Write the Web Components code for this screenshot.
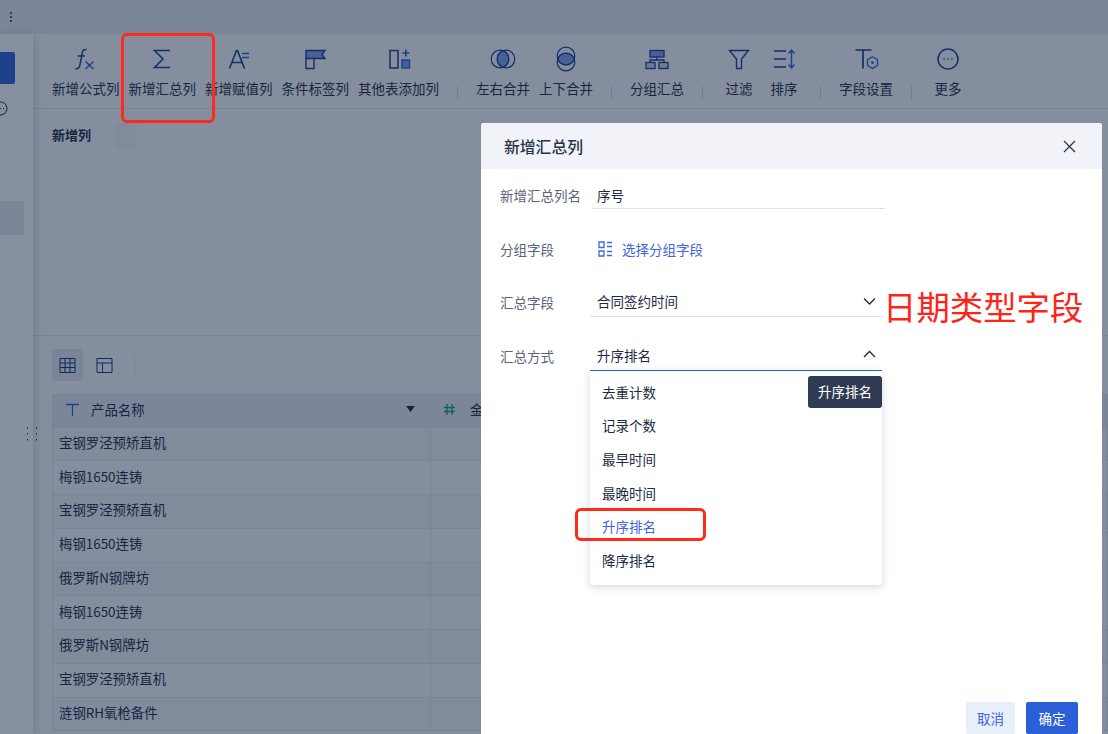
<!DOCTYPE html>
<html lang="zh-CN">
<head>
<meta charset="utf-8">
<title>新增汇总列</title>
<style>
  html, body { margin: 0; height: 734px; overflow: hidden; background: #fff; }
  body { font-family: "Noto Sans CJK SC", "Noto Sans", sans-serif; font-size: 13.4px; color: #1c2a44; }
</style>
</head>
<body>
<app-page>
  <app-sidebar slot="side"></app-sidebar>
  <app-toolbar></app-toolbar>
  <new-columns></new-columns>
  <view-switch></view-switch>
  <data-table></data-table>
  <add-dialog slot="over"></add-dialog>
  <red-mark slot="over" style="left:121px;top:33px;width:94px;height:90px"></red-mark>
  <red-mark slot="over" style="left:575px;top:508px;width:131px;height:33px"></red-mark>
</app-page>

<script>
class AppPage extends HTMLElement {
  constructor() {
    super();
    this.attachShadow({ mode: 'open' });
    this.shadowRoot.innerHTML = `
      <style>
        :host { display: grid; grid-template: 34px 700px / 33px 1075px; width: 1108px; height: 734px; position: relative; overflow: hidden; }
        .top { grid-column: 1 / 3; background: #e7ebf3; display: flex; align-items: center; padding-left: 9px; }
        .side { position: relative; z-index: 1; }
        main { background: #fbfbfc; min-width: 0; overflow: hidden; }
        .mask { position: absolute; inset: 0; z-index: 2; background: rgba(15, 33, 63, .5); }
      </style>
      <div class="top">
        <svg width="4" height="14" viewBox="0 0 4 14" fill="#1c2a44"><circle cx="2" cy="3" r="1"/><circle cx="2" cy="7" r="1"/><circle cx="2" cy="11" r="1"/></svg>
      </div>
      <div class="side"><slot name="side"></slot></div>
      <main><slot></slot></main>
      <div class="mask"></div>
      <slot name="over"></slot>
    `;
  }
}

class AppSidebar extends HTMLElement {
  constructor() {
    super();
    this.attachShadow({ mode: 'open' });
    this.shadowRoot.innerHTML = `
      <style>
        :host { display: block; height: 100%; background: #fff; box-shadow: 2px 0 9px rgba(20, 35, 70, .16); position: relative; }
        .nav { position: absolute; left: 0; top: 18px; width: 15px; height: 32px; background: #2a5fd8; border-radius: 0 2px 2px 0; }
        .more { position: absolute; left: -8px; top: 66px; }
        .hi { position: absolute; left: 0; top: 167px; width: 24px; height: 34px; background: #e4e8f1; }
        .drag { position: absolute; left: 26px; top: 392px; }
      </style>
      <div class="nav"></div>
      <svg class="more" width="17" height="17" viewBox="0 0 17 17" fill="none" stroke="#1c2a44"><circle cx="8.5" cy="8.5" r="6.5"/><path d="M5 8.5h1M8 8.5h1M11 8.5h1"/></svg>
      <div class="hi"></div>
      <svg class="drag" width="12" height="16" viewBox="0 0 12 16" fill="#1c2a44"><rect x="1" y="1" width="1" height="1.5"/><rect x="10" y="1" width="1" height="1.5"/><rect x="1" y="7" width="1" height="1.5"/><rect x="10" y="7" width="1" height="1.5"/><rect x="1" y="13" width="1" height="1.5"/><rect x="10" y="13" width="1" height="1.5"/></svg>
    `;
  }
}

const TOOL_ICONS = {
  fx: `<path d="M12.5 2.8c-2.6-.7-3.700.5-4.200 3L5.800 18.600c-.5 2.500-1.800 3.400-4.300 2.900M3.800 9h7" stroke-width="1.5"/><path d="M11.500 14.500l8 7.500M19.500 14.500l-8 7.500" stroke="#2a5fd8" stroke-width="1.5"/>`,
  sum: `<path d="M20 3.500H4.500L13 12l-8.500 8.500H20" stroke-width="1.6"/>`,
  assign: `<path d="M2.500 21.500L9.500 3.500h1l7 18M5.500 15.500h9" stroke-width="1.6"/><path d="M15 6.500h7M15 10.500h7" stroke="#2a5fd8" stroke-width="1.6"/>`,
  flag: `<path d="M3 3.500h19l-3 4 3 4H3z" fill="#7f9fee" stroke-width="1.4"/><path d="M3 11.500v10h8v-10" stroke-width="1.4"/>`,
  addcol: `<rect x="3" y="3.500" width="8" height="17.500" stroke-width="1.5"/><rect x="15" y="13" width="7.500" height="8" fill="#7f9fee" stroke="#2a5fd8" stroke-width="1.4"/><path d="M18.800 2.500v7M15.300 6h7" stroke="#2a5fd8" stroke-width="1.6"/>`,
  hmerge: `<path d="M12 3.730a8.800 8.800 0 0 1 0 16.540a8.800 8.800 0 0 1 0-16.540z" fill="#7f9fee"/><circle cx="9" cy="12" r="8.800" stroke-width="1.200"/><circle cx="15" cy="12" r="8.800" stroke-width="1.200"/>`,
  vmerge: `<path d="M3.730 12a8.800 8.800 0 0 1 16.540 0a8.800 8.800 0 0 1-16.540 0z" fill="#7f9fee"/><circle cx="12" cy="9" r="8.800" stroke-width="1.200"/><circle cx="12" cy="15" r="8.800" stroke-width="1.200"/>`,
  group: `<rect x="5" y="3.500" width="14" height="6.500" fill="#7f9fee" stroke-width="1.300"/><path d="M12 10v3M5 15.500V13h14v2.500" stroke-width="1.300"/><rect x="1" y="15.500" width="9" height="6" fill="#c9d5f4" stroke-width="1.300"/><rect x="14" y="15.500" width="9" height="6" fill="#c9d5f4" stroke-width="1.300"/>`,
  filter: `<path d="M2.500 3.500h19L14.500 12v9.500h-5V12z" stroke-width="1.400"/>`,
  sort: `<path d="M2 4h12M2 12h12M2 20h12" stroke-width="1.600"/><path d="M19.500 3v18M16.500 6.500l3-3.500 3 3.500M16.500 17.500l3 3.500 3-3.500" stroke="#2a5fd8" stroke-width="1.400"/>`,
  field: `<path d="M1.500 3h16M9 3v18.500" stroke-width="1.700"/><path d="M18.500 9.800l5 2.900v5.800l-5 2.900-5-2.900v-5.800z" stroke="#2a5fd8" stroke-width="1.300"/><circle cx="18.500" cy="15.600" r="1.400" fill="#2a5fd8" stroke="none"/>`,
  more: `<circle cx="12" cy="12" r="10" stroke-width="1.500"/><path d="M7.500 12h1.200M11.400 12h1.200M15.300 12h1.200" stroke-width="1.600"/>`
};

class ToolItem extends HTMLElement {
  constructor() {
    super();
    this.attachShadow({ mode: 'open' });
  }

  connectedCallback() {
    const icon = TOOL_ICONS[this.getAttribute('icon')] || '';
    this.shadowRoot.innerHTML = `
      <style>
        :host { display: flex; flex-direction: column; align-items: center; min-width: 36px; white-space: nowrap; }
        svg { display: block; margin-bottom: 8px; overflow: visible; }
        span { line-height: 18px; font-size: 13.5px; }
      </style>
      <svg width="24" height="24" viewBox="0 0 24 24" fill="none" stroke="#1c3a8e">${icon}</svg>
      <span>${this.getAttribute('label')}</span>
    `;
  }
}

class AppToolbar extends HTMLElement {
  constructor() {
    super();
    this.attachShadow({ mode: 'open' });
    this.shadowRoot.innerHTML = `
      <style>
        :host { display: flex; gap: 9px; height: 75px; box-sizing: border-box; padding: 13px 0 0 19px; border-bottom: 1px solid #e2e5ec; }
        i { align-self: flex-start; width: 1px; height: 13px; margin: 39px 9px 0; background: #d3d7e0; flex: none; }
      </style>
      <tool-item icon="fx" label="新增公式列"></tool-item>
      <tool-item icon="sum" label="新增汇总列"></tool-item>
      <tool-item icon="assign" label="新增赋值列"></tool-item>
      <tool-item icon="flag" label="条件标签列"></tool-item>
      <tool-item icon="addcol" label="其他表添加列"></tool-item>
      <i></i>
      <tool-item icon="hmerge" label="左右合并"></tool-item>
      <tool-item icon="vmerge" label="上下合并"></tool-item>
      <i></i>
      <tool-item icon="group" label="分组汇总"></tool-item>
      <i></i>
      <tool-item icon="filter" label="过滤"></tool-item>
      <tool-item icon="sort" label="排序"></tool-item>
      <i></i>
      <tool-item icon="field" label="字段设置"></tool-item>
      <i></i>
      <tool-item icon="more" label="更多"></tool-item>
    `;
  }
}

class NewColumns extends HTMLElement {
  constructor() {
    super();
    this.attachShadow({ mode: 'open' });
    this.shadowRoot.innerHTML = `
      <style>
        :host { display: flex; height: 227px; box-sizing: border-box; padding: 14px 0 0 19px; border-bottom: 1px solid #e2e5ec; }
        b { font-weight: 700; font-size: 13px; line-height: 24px; width: 63px; }
        i { width: 22px; height: 26px; background: #f3f5f8; }
      </style>
      <b>新增列</b><i></i>
    `;
  }
}

class ViewSwitch extends HTMLElement {
  constructor() {
    super();
    this.attachShadow({ mode: 'open' });
    this.shadowRoot.innerHTML = `
      <style>
        :host { display: flex; align-items: center; height: 58px; box-sizing: border-box; padding: 13px 0 13px 19px; }
        div { width: 31px; height: 32px; display: flex; align-items: center; justify-content: center; border-radius: 2px; margin-right: 6px; }
        .on { background: #e5e9f1; }
        i { width: 1px; height: 22px; background: #e5e8ee; margin-left: 8px; }
      </style>
      <div class="on"><svg width="17" height="17" viewBox="0 0 17 17" fill="none" stroke="#14307f"><path d="M1 1.500h15v14H1zM1 6h15M1 10.500h15M6 1.500v14M11 1.500v14"/></svg></div>
      <div><svg width="17" height="17" viewBox="0 0 17 17" fill="none" stroke="#14307f"><path d="M1 1.500h15v14H1zM1 6h15M6.500 6v9.500"/></svg></div>
      <i></i>
    `;
  }
}

class DataTable extends HTMLElement {
  constructor() {
    super();
    this.attachShadow({ mode: 'open' });
  }

  connectedCallback() {
    const rows = ['宝钢罗泾预矫直机', '梅钢1650连铸', '宝钢罗泾预矫直机', '梅钢1650连铸', '俄罗斯N钢牌坊',
      '梅钢1650连铸', '俄罗斯N钢牌坊', '宝钢罗泾预矫直机', '涟钢RH氧枪备件'];
    this.shadowRoot.innerHTML = `
      <style>
        :host { display: block; margin-left: 19px; }
        .row { display: grid; grid-template-columns: 378px 1fr; height: 33.75px; box-sizing: border-box; border-bottom: 1px solid #e3e6ee; border-left: 1px solid #e3e6ee; }
        .row:nth-child(odd) { background: #f3f5f9; }
        .row > div { display: flex; align-items: center; box-sizing: border-box; border-right: 1px solid #e3e6ee; padding: 0 0 4px 6px; overflow: hidden; white-space: nowrap; }
        .head { height: 33.5px; background: #e7ebf3 !important; }
        .head > div { padding: 0 0 2px 12px; }
        .head span { margin-left: 11px; }
        .head > div + div span { margin-left: 14px; }
        .head .caret { margin: 0 15px 0 auto; }
      </style>
      <div class="row head">
        <div>
          <svg width="15" height="15" viewBox="0 0 15 15" fill="none" stroke="#2a5fd8" stroke-width="1.300"><path d="M1 2.500h13M7.500 2.500V14"/></svg>
          <span>产品名称</span>
          <svg class="caret" width="9" height="6" viewBox="0 0 9 6" fill="#14254d"><path d="M0 0h9L4.500 6z"/></svg>
        </div>
        <div>
          <svg width="13" height="13" viewBox="0 0 13 13" fill="none" stroke="#159a8c" stroke-width="1.300"><path d="M4 1v11M9 1v11M1 4.500h11M1 8.500h11"/></svg>
          <span>金额</span>
        </div>
      </div>
      ${rows.map(r => `<div class="row"><div>${r}</div><div></div></div>`).join('')}
    `;
  }
}

class FormRow extends HTMLElement {
  constructor() {
    super();
    this.attachShadow({ mode: 'open' });
  }

  connectedCallback() {
    this.shadowRoot.innerHTML = `
      <style>
        :host { display: flex; height: 34px; align-items: flex-start; font-size: 13.5px; }
        label { width: 90px; flex: none; color: #5a6478; line-height: 34px; }
        ::slotted(*) { flex: none; }
      </style>
      <label>${this.getAttribute('label')}</label>
      <slot></slot>
    `;
  }
}

class FormSelect extends HTMLElement {
  constructor() {
    super();
    this.attachShadow({ mode: 'open' });
  }

  connectedCallback() {
    const open = this.hasAttribute('open');
    const chevron = open ? 'M1 7l5.500-5.500L12 7' : 'M1 1.500L6.500 7 12 1.500';
    this.shadowRoot.innerHTML = `
      <style>
        :host { display: block; position: relative; width: 292px; }
        .box { height: 32px; box-sizing: border-box; display: flex; align-items: center; justify-content: space-between; padding: 1px 6px 0 7px; border-bottom: 1px solid #dcdfe8; }
        :host([open]) .box { border-bottom: 1px solid #2a5fd8; }
        ::slotted(drop-menu) { position: absolute; left: 0; top: 32px; }
      </style>
      <div class="box">
        <span>${this.getAttribute('value')}</span>
        <svg width="13" height="9" viewBox="0 0 13 9" fill="none" stroke="#1c2a44" stroke-width="1.300"><path d="${chevron}"/></svg>
      </div>
      <slot></slot>
    `;
  }
}

class DropMenu extends HTMLElement {
  constructor() {
    super();
    this.attachShadow({ mode: 'open' });
    const items = ['去重计数', '记录个数', '最早时间', '最晚时间', '升序排名', '降序排名'];
    this.shadowRoot.innerHTML = `
      <style>
        :host { display: block; width: 292px; height: 214px; box-sizing: border-box; padding-top: 5px; background: #fff; border-radius: 0 0 3px 3px; box-shadow: 0 2px 8px rgba(40, 55, 90, .2); z-index: 2; }
        div { height: 33.6px; line-height: 33.6px; padding-left: 12px; }
        .on { color: #3f65e0; }
        .tip { position: absolute; right: 0; top: 5px; width: 74px; height: 32px; padding: 0; line-height: 31px; text-align: center; background: #2f3b52; color: #fff; border-radius: 3px; }
      </style>
      ${items.map(t => `<div class="${t === '升序排名' ? 'on' : ''}">${t}</div>`).join('')}
      <div class="tip">升序排名</div>
    `;
  }
}

class AddDialog extends HTMLElement {
  constructor() {
    super();
    this.attachShadow({ mode: 'open' });
    this.shadowRoot.innerHTML = `
      <style>
        :host { position: absolute; z-index: 3; left: 481px; top: 123px; width: 621px; height: 640px; background: #fff; border-radius: 3px 3px 0 0; display: flex; flex-direction: column; font-size: 13.5px; color: #1c2a44; }
        header { height: 46px; flex: none; display: flex; align-items: center; justify-content: space-between; padding: 0 26px 0 23px; background: #f2f3f8; border-radius: 3px 3px 0 0; }
        h2 { margin: 0; font-size: 15.8px; font-weight: 500; color: #2a3448; }
        .body { flex: 1; display: flex; flex-direction: column; gap: 19.6px; padding: 9px 19px 0; position: relative; }
        .name { width: 293px; height: 31px; margin-left: 2px; box-sizing: border-box; padding-left: 5px; line-height: 35px; border-bottom: 1px solid #dcdfe8; }
        .pick { display: flex; align-items: center; gap: 9px; height: 34px; margin-left: 8px; color: #3f65e0; }
        .foot { flex: none; display: flex; gap: 11px; justify-content: flex-end; padding: 0 24px 29px; }
        button { font: inherit; width: 49px; height: 32px; border: 0; border-radius: 2px; padding: 0; background: #e9eefb; color: #3f65e0; }
        button.ok { width: 52px; background: #2a5fd8; color: #fff; }
        .note { position: absolute; left: 402px; top: 114px; font-size: 33.4px; line-height: 46px; color: #ff2318; white-space: nowrap; }
      </style>
      <header>
        <h2>新增汇总列</h2>
        <svg width="13" height="13" viewBox="0 0 13 13" fill="none" stroke="#2a3448" stroke-width="1.200"><path d="M1 1l11 11M12 1L1 12"/></svg>
      </header>
      <div class="body">
        <form-row label="新增汇总列名"><div class="name">序号</div></form-row>
        <form-row label="分组字段">
          <div class="pick">
            <svg width="15" height="16" viewBox="0 0 15 16" fill="none" stroke="#3f65e0" stroke-width="1.300"><path d="M1 1h5v5.500H1zM1 10h5v5H1zM9 1.500h5M9 5.500h5M9 10.500h5M9 14.500h5"/></svg>
            <span>选择分组字段</span>
          </div>
        </form-row>
        <form-row label="汇总字段"><form-select value="合同签约时间"></form-select></form-row>
        <form-row label="汇总方式"><form-select value="升序排名" open><drop-menu></drop-menu></form-select></form-row>
        <div class="note">日期类型字段</div>
      </div>
      <div class="foot">
        <button>取消</button>
        <button class="ok">确定</button>
      </div>
    `;
  }
}

class RedMark extends HTMLElement {
  constructor() {
    super();
    this.attachShadow({ mode: 'open' });
    this.shadowRoot.innerHTML = `
      <style>
        :host { position: absolute; z-index: 4; box-sizing: border-box; border: 3.5px solid #ff2a1a; border-radius: 6px; }
      </style>
    `;
  }
}

customElements.define('app-page', AppPage);
customElements.define('app-sidebar', AppSidebar);
customElements.define('tool-item', ToolItem);
customElements.define('app-toolbar', AppToolbar);
customElements.define('new-columns', NewColumns);
customElements.define('view-switch', ViewSwitch);
customElements.define('data-table', DataTable);
customElements.define('form-row', FormRow);
customElements.define('form-select', FormSelect);
customElements.define('drop-menu', DropMenu);
customElements.define('add-dialog', AddDialog);
customElements.define('red-mark', RedMark);
</script>
</body>
</html>
